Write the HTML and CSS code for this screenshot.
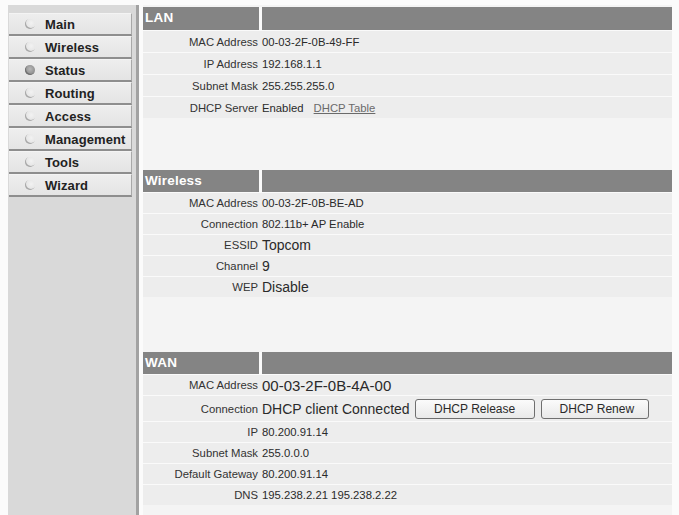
FILE: index.html
```html
<!DOCTYPE html>
<html>
<head>
<meta charset="utf-8">
<link rel="stylesheet" href="styles.css">
</head>
<body>
<div class="page">
  <nav class="sidebar">
    <a class="nav-btn"><span class="dot"></span>Main</a>
    <a class="nav-btn"><span class="dot"></span>Wireless</a>
    <a class="nav-btn"><span class="dot dot-active"></span>Status</a>
    <a class="nav-btn"><span class="dot"></span>Routing</a>
    <a class="nav-btn"><span class="dot"></span>Access</a>
    <a class="nav-btn"><span class="dot"></span>Management</a>
    <a class="nav-btn"><span class="dot"></span>Tools</a>
    <a class="nav-btn"><span class="dot"></span>Wizard</a>
  </nav>
  <main class="content">
    <section class="sec sec-lan">
      <div class="sec-head"><div class="head-title head-tall">LAN</div><div class="head-fill head-tall"></div></div>
      <div class="row row-lan"><div class="lbl">MAC Address</div><div class="val">00-03-2F-0B-49-FF</div></div>
      <div class="row row-lan"><div class="lbl">IP Address</div><div class="val">192.168.1.1</div></div>
      <div class="row row-lan"><div class="lbl">Subnet Mask</div><div class="val">255.255.255.0</div></div>
      <div class="row row-lan"><div class="lbl">DHCP Server</div><div class="val">Enabled <a class="link">DHCP Table</a></div></div>
    </section>
    <section class="sec sec-wl">
      <div class="sec-head"><div class="head-title">Wireless</div><div class="head-fill"></div></div>
      <div class="row"><div class="lbl">MAC Address</div><div class="val">00-03-2F-0B-BE-AD</div></div>
      <div class="row"><div class="lbl">Connection</div><div class="val">802.11b+ AP Enable</div></div>
      <div class="row"><div class="lbl">ESSID</div><div class="val val-big">Topcom</div></div>
      <div class="row"><div class="lbl">Channel</div><div class="val val-big">9</div></div>
      <div class="row"><div class="lbl">WEP</div><div class="val val-big">Disable</div></div>
    </section>
    <section class="sec sec-wan">
      <div class="sec-head"><div class="head-title">WAN</div><div class="head-fill"></div></div>
      <div class="row"><div class="lbl">MAC Address</div><div class="val val-huge">00-03-2F-0B-4A-00</div></div>
      <div class="row row-tall"><div class="lbl">Connection</div><div class="val val-big val-flex">DHCP client Connected<button class="btn btn-release">DHCP Release</button><button class="btn">DHCP Renew</button></div></div>
      <div class="row"><div class="lbl">IP</div><div class="val">80.200.91.14</div></div>
      <div class="row"><div class="lbl">Subnet Mask</div><div class="val">255.0.0.0</div></div>
      <div class="row"><div class="lbl">Default Gateway</div><div class="val">80.200.91.14</div></div>
      <div class="row"><div class="lbl">DNS</div><div class="val">195.238.2.21 195.238.2.22</div></div>
    </section>
  </main>
</div>
</body>
</html>
```
FILE: styles.css
```css
html, body {
  margin: 0;
  padding: 0;
  background: #fbfbfb;
  font-family: "Liberation Sans", Arial, sans-serif;
  color: #2a2a2a;
}
.page {
  display: flex;
  align-items: stretch;
  height: 515px;
  padding: 5px 0 0 8px;
  box-sizing: border-box;
  overflow: hidden;
}
.sidebar {
  width: 131px;
  background: #d9d9d9;
  border-right: 3px solid #a2a2a2;
  padding: 8px 0 0 1px;
  box-sizing: border-box;
  display: flex;
  flex-direction: column;
}
.nav-btn {
  display: flex;
  align-items: center;
  width: 123px;
  height: 23px;
  background: linear-gradient(#eeeeee, #e4e4e4);
  border-top: 1px solid #f4f4f4;
  border-bottom: 2px solid #8e8e8e;
  border-right: 1px solid #a8a8a8;
  box-sizing: border-box;
  font-weight: bold;
  font-size: 13px;
  color: #222;
  padding-left: 16px;
  letter-spacing: 0.1px;
}
.dot {
  width: 10px;
  height: 10px;
  border-radius: 50%;
  margin-right: 10px;
  background: radial-gradient(circle at 62% 40%, #f2f2f2 0, #e6e6e6 55%, #c4c4c4 100%);
  box-shadow: inset 1px -1px 0 #a8a8a8;
  flex: none;
}
.dot-active {
  background: radial-gradient(circle at 50% 40%, #b8b8b8 0, #8a8a8a 75%);
  box-shadow: inset 1px -1px 0 #707070;
}
.content {
  width: 529px;
  margin-left: 4px;
  padding-top: 2px;
  background: #f4f4f4;
  align-self: stretch;
}
.sec-lan { margin-bottom: 52px; }
.sec-wl { margin-bottom: 55px; }
.sec-head {
  display: grid;
  grid-template-columns: 116px 1fr;
  column-gap: 3px;
  background: #fafafa;
}
.head-title, .head-fill {
  background: #848484;
  height: 22px;
}
.head-tall { height: 23px; }
.head-title {
  color: #fff;
  font-weight: bold;
  font-size: 13.5px;
  line-height: 21px;
  padding-left: 2px;
  letter-spacing: 0.2px;
}
.row {
  display: grid;
  grid-template-columns: 116px 1fr;
  column-gap: 3px;
  align-items: center;
  height: 21px;
  box-sizing: border-box;
  border-top: 1px solid #fafafa;
  background: #ededed;
}
.row-lan { height: 22px; }
.row-tall { height: 26px; }
.lbl {
  text-align: right;
  font-size: 11.3px;
  padding-right: 1px;
  white-space: nowrap;
  color: #333;
}
.val {
  font-size: 11.3px;
  white-space: nowrap;
  color: #2a2a2a;
}
.val-big { font-size: 14px; }
.val-huge { font-size: 15px; }
.val-flex {
  display: flex;
  align-items: center;
}
.link {
  color: #6a6a6a;
  text-decoration: underline;
  margin-left: 7px;
}
.btn {
  font-family: "Liberation Sans", Arial, sans-serif;
  font-size: 12px;
  color: #2a2a2a;
  height: 20px;
  padding: 0 18px;
  background: linear-gradient(#fbfbfb, #e9e9e9);
  border: 1px solid #6f6f6f;
  border-radius: 3px;
  box-sizing: border-box;
}
.btn-release {
  margin-left: 5px;
  margin-right: 6px;
  width: 120px;
}
.btn-release + .btn { width: 108px; }
```
